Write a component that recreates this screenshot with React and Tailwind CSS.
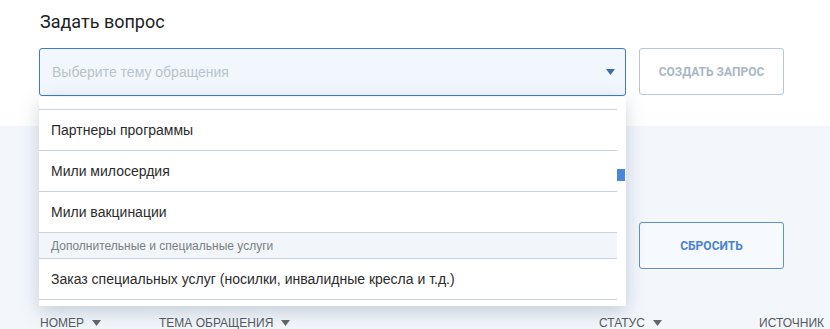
import { useState } from "react";

const ITEMS = [
  { key: "partners", label: "Партнеры программы" },
  { key: "mercy", label: "Мили милосердия" },
  { key: "vaccine", label: "Мили вакцинации" },
  { key: "group", label: "Дополнительные и специальные услуги", group: true },
  { key: "special", label: "Заказ специальных услуг (носилки, инвалидные кресла и т.д.)" },
];

const COLUMNS = [
  { label: "НОМЕР", width: "w-[119px]", sort: true },
  { label: "ТЕМА ОБРАЩЕНИЯ", width: "w-[440px]", sort: true },
  { label: "СТАТУС", width: "w-[160px]", sort: true },
  { label: "ИСТОЧНИК", width: "", sort: false },
];

function Caret({ className }) {
  return (
    <svg width="9" height="6" viewBox="0 0 9 6" className={className}>
      <path d="M0 0h9L4.5 6z" fill="currentColor" />
    </svg>
  );
}

function Dropdown() {
  return (
    <div className="absolute left-0 top-[49px] w-[587px] h-[209px] bg-white shadow-[0_6px_18px_rgba(40,60,90,0.22)] z-10 flex">
      <ul className="flex-1 pt-[12px]">
        {ITEMS.map((item) =>
          item.group ? (
            <li
              key={item.key}
              className="h-[26px] border-t border-[#c9d3dd] bg-[#f2f6fa] pl-3 flex items-center text-[12px] text-[#7a7f85]"
            >
              {item.label}
            </li>
          ) : (
            <li
              key={item.key}
              className="h-[41px] border-t border-[#c9d3dd] pl-3 flex items-center text-[14px] text-[#2b2b2b]"
            >
              {item.label}
            </li>
          )
        )}
        <li className="border-t border-[#c9d3dd]" />
      </ul>
      {/* scrollbar */}
      <div className="w-[9px] pt-[72px]">
        <div className="w-[8px] h-[12px] bg-[#4a88dc]" />
      </div>
    </div>
  );
}

export default function App() {
  const [open] = useState(true);

  return (
    <div className="w-[830px] h-[329px] overflow-hidden flex flex-col bg-white font-['Liberation_Sans',Arial,sans-serif]">
      {/* Ask question */}
      <section className="h-[126px] shrink-0 pl-[39px] pt-[11px]">
        <h2 className="pl-px text-[18px] leading-[22px] text-[#222] font-['Roboto',sans-serif]">Задать вопрос</h2>
        <div className="flex gap-[13px] mt-[15px]">
          <div className="relative">
            <div className="w-[587px] h-[48px] rounded-[3px] border border-[#3a7bd5] bg-[#f2f7fd] flex items-center justify-between pl-[12px] pr-[10px]">
              <span className="text-[14px] text-[#b9c3cd]">Выберите тему обращения</span>
              <Caret className="text-[#3d6ea8]" />
            </div>
            {open && <Dropdown />}
          </div>
          <button className="w-[145px] h-[47px] rounded-[3px] border border-[#b9c6d5] bg-white text-[12px] font-bold text-[#a9b7c7] font-['Roboto',sans-serif]">
            СОЗДАТЬ ЗАПРОС
          </button>
        </div>
      </section>

      {/* Filters and table */}
      <section className="flex-1 bg-[#f3f7fc] pl-[39px]">
        <div className="flex justify-end pr-[46px] pt-[96px]">
          <button className="w-[145px] h-[47px] rounded-[3px] border border-[#5f92d0] bg-[#f6f9fd] text-[12px] font-bold text-[#4a84cc] font-['Roboto',sans-serif]">
            СБРОСИТЬ
          </button>
        </div>
        <div className="flex items-center mt-[45px] pl-px text-[12px] text-[#555b61]">
          {COLUMNS.map((col) => (
            <div key={col.label} className={`${col.width} shrink-0 flex items-center gap-[8px]`}>
              <span>{col.label}</span>
              {col.sort && <Caret className="text-[#666]" />}
            </div>
          ))}
        </div>
      </section>
    </div>
  );
}
